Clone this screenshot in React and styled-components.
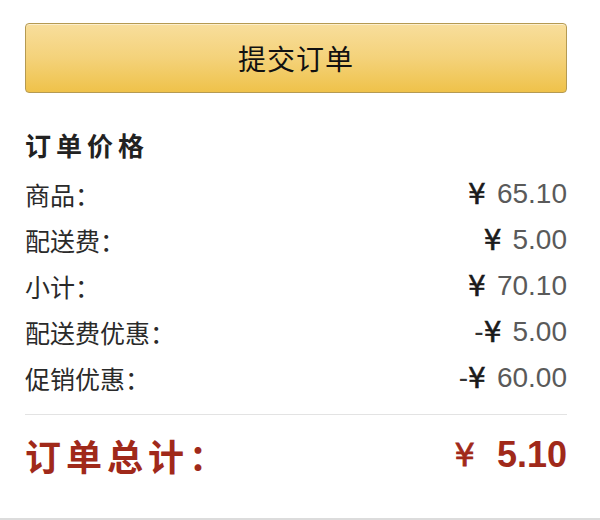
import React from "react"
import styled, { createGlobalStyle } from "styled-components"

const GlobalStyle = createGlobalStyle`
  html, body {
    margin: 0;
    padding: 0;
    background: #ffffff;
  }
  body {
    font-family: "Liberation Sans", "Noto Sans CJK SC", sans-serif;
  }
`

const Panel = styled.div`
  width: 600px;
  height: 520px;
  box-sizing: border-box;
  padding: 23px 33px 0 25px;
  border-bottom: 2px solid #dcdcdc;
  display: flex;
  flex-direction: column;
`

const SubmitButton = styled.button`
  height: 70px;
  width: 100%;
  box-sizing: border-box;
  border: 1px solid #b59a52;
  border-radius: 4px;
  background: linear-gradient(to bottom, #f8de9c 0%, #f4d27a 50%, #efc24a 100%);
  box-shadow: inset 0 1px 0 rgba(255, 255, 255, 0.5);
  font-family: "Noto Sans CJK SC", sans-serif;
  font-size: 28px;
  color: #111;
  letter-spacing: 1px;
  cursor: pointer;
  padding: 0;
`

const Summary = styled.div`
  margin-top: 29px;
  display: flex;
  flex-direction: column;
`

const Heading = styled.div`
  height: 46px;
  line-height: 46px;
  font-family: "Noto Sans CJK SC", sans-serif;
  font-size: 26px;
  font-weight: 700;
  letter-spacing: 5px;
  color: #222;
  margin-bottom: 3px;
`

const Row = styled.div`
  height: 46px;
  display: flex;
  align-items: center;
  justify-content: space-between;
`

const Label = styled.span`
  font-family: "Noto Sans CJK SC", sans-serif;
  font-size: 25px;
  color: #2a2a2a;
`

const Price = styled.span`
  display: flex;
  align-items: center;
  font-size: 28px;
  color: #5a5a5a;
`

const Sign = styled.span`
  color: #333;
`

const Yen = styled.span`
  font-family: "DejaVu Sans", sans-serif;
  font-size: 28px;
  font-weight: 400;
  color: #1a1a1a;
  -webkit-text-stroke: 0.6px #1a1a1a;
  margin-right: 11px;
`

const Divider = styled.hr`
  margin: 13px 0 0;
  border: none;
  height: 1px;
  background-color: #e3e3e3;
`

const TotalRow = styled.div`
  height: 50px;
  margin-top: 15px;
  display: flex;
  align-items: center;
  justify-content: space-between;
  color: #a0291a;
`

const TotalLabel = styled.span`
  font-family: "Noto Sans CJK SC", sans-serif;
  font-size: 36px;
  font-weight: 700;
  letter-spacing: 5px;
`

const TotalPrice = styled.span`
  display: flex;
  align-items: center;
  font-size: 36px;
  font-weight: 700;
`

const TotalYen = styled.span`
  font-family: "DejaVu Sans", sans-serif;
  font-size: 32px;
  font-weight: 400;
  -webkit-text-stroke: 0.8px #a0291a;
  margin-right: 22px;
`

const lines = [
    { label: "商品：", sign: "", amount: "65.10" },
    { label: "配送费：", sign: "", amount: "5.00" },
    { label: "小计：", sign: "", amount: "70.10" },
    { label: "配送费优惠：", sign: "-", amount: "5.00" },
    { label: "促销优惠：", sign: "-", amount: "60.00" },
]

export default function App() {
    return (
        <>
            <GlobalStyle />
            <Panel>
                <SubmitButton>提交订单</SubmitButton>
                <Summary>
                    <Heading>订单价格</Heading>
                    {lines.map((line) => (
                        <Row key={line.label}>
                            <Label>{line.label}</Label>
                            <Price>
                                {line.sign && <Sign>{line.sign}</Sign>}
                                <Yen>¥</Yen>
                                {line.amount}
                            </Price>
                        </Row>
                    ))}
                    <Divider />
                    <TotalRow>
                        <TotalLabel>订单总计：</TotalLabel>
                        <TotalPrice>
                            <TotalYen>¥</TotalYen>
                            5.10
                        </TotalPrice>
                    </TotalRow>
                </Summary>
            </Panel>
        </>
    )
}
